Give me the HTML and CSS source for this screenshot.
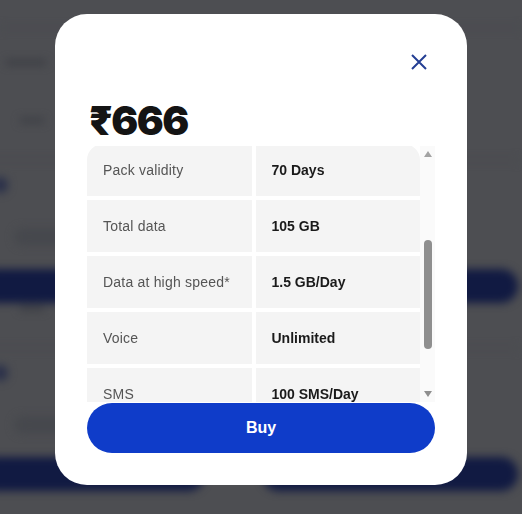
FILE: index.html
```html
<!DOCTYPE html>
<html lang="en">
<head>
    <meta charset="UTF-8">
    <meta name="viewport" content="width=device-width, initial-scale=1.0">
    <title>Pack details</title>
    <link rel="stylesheet" href="styles.css">
</head>
<body>
    <!-- Page behind the dialog -->
    <div class="page" aria-hidden="true">
        <div class="page-top">
            <div class="page-rule"></div>
            <div class="page-crumb"></div>
        </div>
        <div class="plans">
            <div class="plan">
                <div class="plan-line"></div>
                <div class="plan-rule"></div>
                <div class="plan-icon"></div>
                <div class="plan-blob"></div>
                <div class="plan-btn"></div>
            </div>
            <div class="plan">
                <div class="plan-line"></div>
                <div class="plan-rule"></div>
                <div class="plan-icon"></div>
                <div class="plan-blob"></div>
                <div class="plan-btn"></div>
            </div>
            <div class="plan">
                <div class="plan-line"></div>
                <div class="plan-rule"></div>
                <div class="plan-icon"></div>
                <div class="plan-blob"></div>
                <div class="plan-btn"></div>
            </div>
            <div class="plan">
                <div class="plan-line"></div>
                <div class="plan-rule"></div>
                <div class="plan-icon"></div>
                <div class="plan-blob"></div>
                <div class="plan-btn"></div>
            </div>
        </div>
    </div>

    <!-- Dialog -->
    <div class="overlay">
        <div class="modal" role="dialog" aria-label="Pack details">
            <div class="modal-head">
                <button class="close-btn" aria-label="Close">
                    <svg width="16" height="16" viewBox="0 0 16 16" fill="none" stroke="#243f94" stroke-width="2">
                        <path d="M1 1L15 15M15 1L1 15"/>
                    </svg>
                </button>
            </div>
            <h2 class="price">₹666</h2>

            <div class="specs-box">
                <div class="specs" id="specs">
                    <div class="spec-group">
                        <div class="spec-cell label">Pack price</div>
                        <div class="spec-cell value">₹666</div>
                        <div class="spec-cell label">Plan type</div>
                        <div class="spec-cell value">Prepaid</div>
                        <div class="spec-cell label">Category</div>
                        <div class="spec-cell value">Popular plans</div>
                    </div>
                    <div class="spec-group" id="pack-details">
                        <div class="spec-cell label">Pack validity</div>
                        <div class="spec-cell value">70 Days</div>
                        <div class="spec-cell label">Total data</div>
                        <div class="spec-cell value">105 GB</div>
                        <div class="spec-cell label">Data at high speed*</div>
                        <div class="spec-cell value">1.5 GB/Day</div>
                        <div class="spec-cell label">Voice</div>
                        <div class="spec-cell value">Unlimited</div>
                        <div class="spec-cell label">SMS</div>
                        <div class="spec-cell value">100 SMS/Day</div>
                    </div>
                    <div class="spec-group">
                        <div class="spec-cell label">Subscriptions</div>
                        <div class="spec-cell value">JioTV, JioCloud</div>
                    </div>
                </div>
                <div class="scrollbar" aria-hidden="true">
                    <span class="arrow arrow-up"></span>
                    <div class="scroll-track" id="scroll-track">
                        <div class="scroll-thumb" id="scroll-thumb"></div>
                    </div>
                    <span class="arrow arrow-down"></span>
                </div>
            </div>

            <button class="buy-btn">Buy</button>
        </div>
    </div>

    <script src="script.js"></script>
</body>
</html>
```

FILE: styles.css
```css
/* Page */
body {
    margin: 0;
    height: 100vh;
    overflow: hidden;
    background: #4d4e52;
    font-family: 'Liberation Sans', Arial, sans-serif;
}

/* Blurred page behind the dialog */
.page {
    filter: blur(4px);
}
.page-top {
    height: 115px;
    padding-top: 26px;
    box-sizing: border-box;
}
.page-rule {
    height: 4px;
    background: #494b50;
}
.page-crumb {
    width: 40px;
    height: 5px;
    margin: 30px 0 0 6px;
    background: #3a3c42;
}
.plans {
    display: grid;
    grid-template-columns: 225px 256px;
    column-gap: 57px;
    margin-left: -20px;
}
.plan {
    height: 188px;
    display: flex;
    flex-direction: column;
}
.plan-line {
    width: 24px;
    height: 5px;
    margin: 3px 0 0 40px;
    background: #3c3e44;
}
.plan-rule {
    height: 4px;
    margin-top: 35px;
    background: #4a4c50;
}
.plan-icon {
    width: 16px;
    height: 16px;
    margin: 15px 0 0 12px;
    border-radius: 50%;
    background: #2a304a;
}
.plan-blob {
    width: 60px;
    height: 18px;
    margin: 35px 0 0 34px;
    border-radius: 9px;
    background: #46484d;
}
.plan-btn {
    height: 34px;
    margin-top: 23px;
    border-radius: 17px;
    background: #111a42;
}

/* Dialog */
.overlay {
    position: fixed;
    inset: 0;
    display: flex;
    justify-content: center;
    align-items: flex-start;
    padding-top: 14px;
}
.modal {
    width: 412px;
    box-sizing: border-box;
    padding: 32px;
    background: #fff;
    border-radius: 32px;
}
.modal-head {
    display: flex;
    justify-content: flex-end;
    height: 32px;
}
.close-btn {
    width: 32px;
    height: 32px;
    padding: 0;
    border: none;
    background: none;
    display: flex;
    align-items: center;
    justify-content: center;
    cursor: pointer;
}
.price {
    height: 48px;
    margin: 19px 0 1px 2px;
    font-family: Inter, 'Noto Sans', sans-serif;
    font-size: 40px;
    font-weight: 900;
    line-height: 48px;
    letter-spacing: -1.5px;
    color: #141414;
}

/* Pack details list with its scrollbar */
.specs-box {
    display: flex;
    height: 256px;
    margin-bottom: 1px;
}
.specs {
    flex: 1;
    overflow-y: auto;
    scrollbar-width: none;
}
.scrollbar {
    width: 15px;
    flex-shrink: 0;
    background: #fafafa;
    display: flex;
    flex-direction: column;
    align-items: center;
}
.arrow {
    width: 0;
    height: 0;
    border-left: 4.5px solid transparent;
    border-right: 4.5px solid transparent;
}
.arrow-up {
    margin: 5px 0 4px;
    border-bottom: 6px solid #a3a3a3;
}
.arrow-down {
    margin: 4px 0 5px;
    border-top: 6px solid #8f8f8f;
}
.scroll-track {
    flex: 1;
    width: 8px;
}
.scroll-thumb {
    width: 8px;
    height: 110px;
    border-radius: 4px;
    background: #8f8f8f;
}
.spec-group {
    display: grid;
    grid-template-columns: 1fr 1fr;
    gap: 4px;
    border-radius: 16px;
    overflow: hidden;
    margin-bottom: 20px;
}
.spec-group:last-child {
    margin-bottom: 0;
}
.spec-cell {
    height: 52px;
    display: flex;
    align-items: center;
    padding: 0 16px;
    background: #f4f4f4;
    font-size: 14px;
}
.label {
    color: #555;
    letter-spacing: 0.2px;
}
.value {
    color: #1a1a1a;
    font-weight: bold;
}

.buy-btn {
    width: 100%;
    height: 50px;
    border: none;
    border-radius: 25px;
    background: #0f3cc9;
    color: #fff;
    font-family: 'Liberation Sans', Arial, sans-serif;
    font-size: 16px;
    font-weight: bold;
    cursor: pointer;
}
```

FILE: script.js
```js
// Elements
const specs = document.getElementById("specs");
const packDetails = document.getElementById("pack-details");
const track = document.getElementById("scroll-track");
const thumb = document.getElementById("scroll-thumb");

// Keep the scrollbar thumb in step with the list
function updateThumb() {
    const ratio = specs.clientHeight / specs.scrollHeight;
    const thumbHeight = track.clientHeight * ratio;
    const maxScroll = specs.scrollHeight - specs.clientHeight;
    const top = maxScroll > 0 ? (specs.scrollTop / maxScroll) * (track.clientHeight - thumbHeight) : 0;
    thumb.style.height = `${thumbHeight}px`;
    thumb.style.marginTop = `${top}px`;
}

specs.addEventListener("scroll", updateThumb);

// Open the list at the pack details group
specs.scrollTop = packDetails.offsetTop - specs.offsetTop + 2;
updateThumb();
```
